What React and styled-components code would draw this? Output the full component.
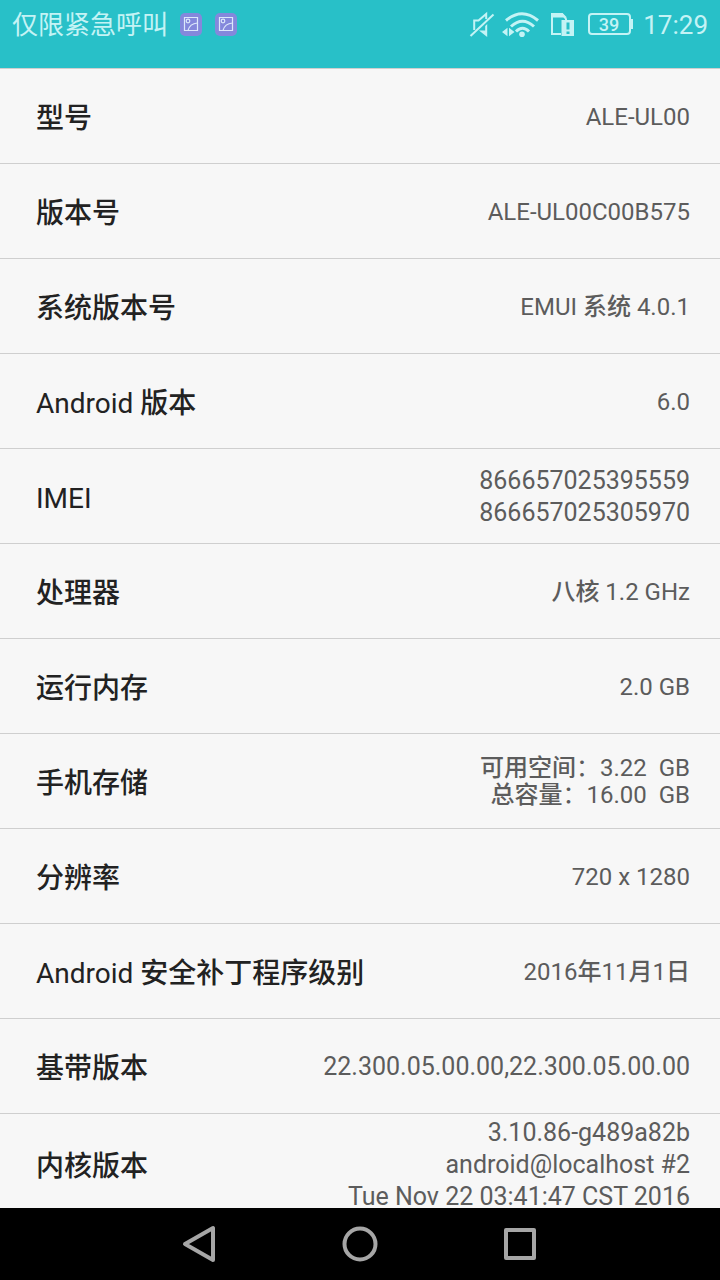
import styled, { createGlobalStyle } from "styled-components";

const GlobalStyle = createGlobalStyle`
    * {
        box-sizing: border-box;
    }

    body {
        margin: 0;
        background: #f7f7f7;
        font-family: Roboto, "Noto Sans CJK SC", sans-serif;
    }
`;

const Screen = styled.div`
    display: flex;
    flex-direction: column;
    height: 100vh;
    overflow: hidden;
`;

const StatusBar = styled.header`
    display: flex;
    justify-content: space-between;
    flex-shrink: 0;
    padding: 0 12px 18px;
    background: #28c0c8;
    color: #c4f3f5;
`;

const StatusGroup = styled.div`
    display: flex;
    align-items: center;
    gap: ${({ $gap }) => $gap}px;
    height: 50px;
`;

const Carrier = styled.span`
    font-size: 26px;
    line-height: 50px;
`;

const Clock = styled.time`
    font-size: 26px;
    line-height: 50px;
`;

const Main = styled.main`
    flex: 1;
    min-height: 0;
    overflow: hidden;
`;

const List = styled.dl`
    margin: 0;
`;

const Row = styled.div`
    display: flex;
    align-items: center;
    justify-content: space-between;
    gap: 24px;
    min-height: 95px;
    padding: 3px 30px 1px 36px;
    border-top: 1px solid #cfcfcf;
`;

const Label = styled.dt`
    padding-top: 3px;
    color: #222;
    font-size: 28px;
    line-height: 40px;
`;

const Value = styled.dd`
    margin: 0;
    color: #5c5c5c;
    font-size: ${({ $large }) => ($large ? 25 : 24)}px;
    line-height: ${({ $tight }) => ($tight ? 27 : 32)}px;
    text-align: right;
    white-space: pre-line;
`;

const Han = styled.span`
    font-weight: 500;
`;

const NavBar = styled.nav`
    display: flex;
    align-items: center;
    justify-content: center;
    gap: 88px;
    flex-shrink: 0;
    height: 72px;
    background: #000;
`;

const NavButton = styled.button`
    display: flex;
    align-items: center;
    justify-content: center;
    width: 72px;
    height: 72px;
    padding: 0;
    border: 0;
    background: none;
    color: #a6a6a6;
`;

const NavIcon = styled.svg`
    fill: none;
    stroke: currentColor;
    stroke-width: 4;
    stroke-linejoin: round;
`;

const rows = [
    { label: "型号", value: "ALE-UL00" },
    { label: "版本号", value: "ALE-UL00C00B575" },
    { label: "系统版本号", value: "EMUI 系统 4.0.1" },
    { label: "Android 版本", value: "6.0" },
    { label: "IMEI", value: "866657025395559\n866657025305970", large: true },
    { label: "处理器", value: "八核 1.2 GHz" },
    { label: "运行内存", value: "2.0 GB" },
    {
        label: "手机存储",
        value: "可用空间：3.22 \u00a0GB\n总容量：16.00 \u00a0GB",
        tight: true,
    },
    { label: "分辨率", value: "720 x 1280" },
    { label: "Android 安全补丁程序级别", value: "2016年11月1日" },
    {
        label: "基带版本",
        value: "22.300.05.00.00,22.300.05.00.00",
        large: true,
    },
    {
        label: "内核版本",
        value: "3.10.86-g489a82b\nandroid@localhost #2\nTue Nov 22 03:41:47 CST 2016",
        large: true,
    },
];

// Chinese runs are set one weight heavier than the Latin text beside them
function MixedText({ children }) {
    return children
        .split(/([\u4e00-\u9fff]+)/)
        .map((part, i) => (i % 2 ? <Han key={i}>{part}</Han> : part));
}

function PictureIcon() {
    return (
        <svg width="24" height="24" viewBox="0 0 24 24" fill="none">
            <rect x="1" y="0" width="22" height="23" rx="5" fill="#8488dc" />
            <g stroke="#dce8fb" strokeWidth="1.2">
                <path d="M5.5 4.5h13v13h-13z" />
                <circle cx="9" cy="8" r="1.8" />
                <path d="M9 17.5c1-4 4-7 9.500-7.500" />
            </g>
        </svg>
    );
}

function MuteIcon() {
    return (
        <svg
            width="24"
            height="28"
            viewBox="0 0 24 28"
            overflow="visible"
            fill="none"
            stroke="currentColor"
            strokeWidth="2"
        >
            <path d="M6.200 19V9.500H10.500L18.200 3V8" />
            <path d="M11 19.500L19.200 26V13L17.200 15V19.500z" fill="currentColor" stroke="none" />
            <path d="M2.500 25L25.500 3.500" />
        </svg>
    );
}

function WifiIcon() {
    return (
        <svg width="38" height="28" viewBox="0 0 38 28" fill="none">
            <g stroke="currentColor" strokeWidth="3">
                <path d="M4 9.500Q20 -4 36 9.500" />
                <path d="M9 15.500Q20.500 5 32 15.500" />
                <path d="M14 20.500Q20.500 14 27 20.500" />
            </g>
            <circle cx="20" cy="23.200" r="2.800" fill="currentColor" />
            <path d="M0 21l5.500-4.200v8.400zM12.500 21l-5.500-4.200v8.400z" fill="currentColor" />
        </svg>
    );
}

function SimAlertIcon() {
    return (
        <svg width="27" height="26" viewBox="0 0 27 26" fill="none">
            <path d="M11 22H2V2h10l4 5v2" stroke="currentColor" strokeWidth="2" />
            <path d="M1 1h11.500l4.500 4.500H1z" fill="currentColor" />
            <path d="M11.500 8h12.500v16H11.500z" fill="currentColor" />
            <path d="M18 10.500v7M18 19.500v2.500" stroke="#28c0c8" strokeWidth="3" />
        </svg>
    );
}

function BatteryIcon() {
    return (
        <svg width="46" height="24" viewBox="0 0 46 24" role="img" aria-label="39%">
            <rect
                x="2"
                y="1"
                width="41"
                height="20"
                rx="3"
                fill="none"
                stroke="currentColor"
                strokeWidth="2"
            />
            <path d="M43 6h3v10h-3z" fill="currentColor" />
            <text
                x="22"
                y="18"
                fill="currentColor"
                fontSize="18"
                fontWeight="500"
                textAnchor="middle"
            >
                39
            </text>
        </svg>
    );
}

export default function App() {
    return (
        <Screen>
            <GlobalStyle />
            <StatusBar>
                <StatusGroup $gap={11}>
                    <Carrier>仅限紧急呼叫</Carrier>
                    <PictureIcon />
                    <PictureIcon />
                </StatusGroup>
                <StatusGroup $gap={10}>
                    <MuteIcon />
                    <WifiIcon />
                    <SimAlertIcon />
                    <BatteryIcon />
                    <Clock>17:29</Clock>
                </StatusGroup>
            </StatusBar>
            <Main>
                <List>
                    {rows.map(({ label, value, tight, large }) => (
                        <Row key={label}>
                            <Label>
                                <MixedText>{label}</MixedText>
                            </Label>
                            <Value $tight={tight} $large={large}>
                                <MixedText>{value}</MixedText>
                            </Value>
                        </Row>
                    ))}
                </List>
            </Main>
            <NavBar>
                <NavButton aria-label="Back">
                    <NavIcon width="36" height="40" viewBox="0 0 36 40">
                        <path d="M3 20L31 4v32z" />
                    </NavIcon>
                </NavButton>
                <NavButton aria-label="Home">
                    <NavIcon width="36" height="36" viewBox="0 0 36 36">
                        <circle cx="18" cy="18" r="15.500" />
                    </NavIcon>
                </NavButton>
                <NavButton aria-label="Recent apps">
                    <NavIcon width="32" height="32" viewBox="0 0 32 32">
                        <path d="M2 2h28v28H2z" />
                    </NavIcon>
                </NavButton>
            </NavBar>
        </Screen>
    );
}
